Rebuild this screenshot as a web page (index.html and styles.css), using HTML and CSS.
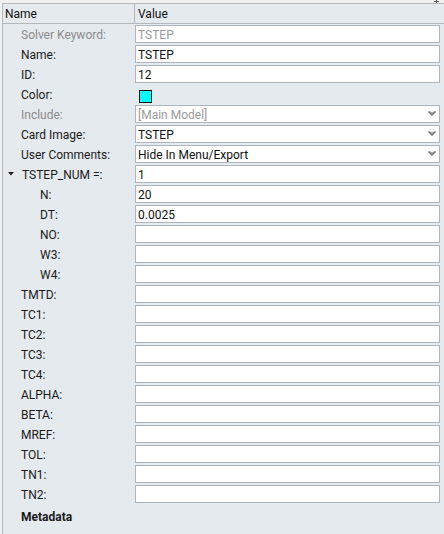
FILE: index.html
```html
<!DOCTYPE html>
<html>
<head>
<meta charset="utf-8">
<link rel="stylesheet" href="styles.css">
</head>
<body>
<div class="topbar"><svg class="pin" width="5" height="3" viewBox="0 0 5 3"><path d="M0 1.5 H5 M2.5 0 V3" stroke="#555" stroke-width="1"/></svg></div>
<div class="panel">
  <div class="header">
    <div class="hcell hname">Name</div>
    <div class="hcell">Value</div>
  </div>
  <div class="rows">
    <div class="row"><div class="label dis">Solver Keyword:</div><div class="field dis">TSTEP</div></div>
    <div class="row"><div class="label">Name:</div><div class="field">TSTEP</div></div>
    <div class="row"><div class="label">ID:</div><div class="field">12</div></div>
    <div class="row"><div class="label">Color:</div><div class="swatchcell"><span class="swatch"></span></div></div>
    <div class="row"><div class="label dis">Include:</div><div class="field dis select">[Main Model]<svg class="chev" width="8" height="6" viewBox="0 0 8 6"><path d="M0.5 0.5 L4 4 L7.5 0.5" fill="none" stroke="#6f6f6f" stroke-width="1.4"/><path d="M2 0.5 L4 2.5 L6 0.5" fill="none" stroke="#6f6f6f" stroke-width="1"/></svg></div></div>
    <div class="row"><div class="label">Card Image:</div><div class="field select">TSTEP<svg class="chev" width="8" height="6" viewBox="0 0 8 6"><path d="M0.5 0.5 L4 4 L7.5 0.5" fill="none" stroke="#6f6f6f" stroke-width="1.4"/><path d="M2 0.5 L4 2.5 L6 0.5" fill="none" stroke="#6f6f6f" stroke-width="1"/></svg></div></div>
    <div class="row"><div class="label">User Comments:</div><div class="field select">Hide In Menu/Export<svg class="chev" width="8" height="6" viewBox="0 0 8 6"><path d="M0.5 0.5 L4 4 L7.5 0.5" fill="none" stroke="#6f6f6f" stroke-width="1.4"/><path d="M2 0.5 L4 2.5 L6 0.5" fill="none" stroke="#6f6f6f" stroke-width="1"/></svg></div></div>
    <div class="row"><div class="label group"><svg class="tri" width="6" height="4" viewBox="0 0 6 4"><path d="M0 0 H6 L3 3.5 Z" fill="#222"/></svg>TSTEP_NUM =:</div><div class="field">1</div></div>
    <div class="row"><div class="label sub">N:</div><div class="field">20</div></div>
    <div class="row"><div class="label sub">DT:</div><div class="field">0.0025</div></div>
    <div class="row"><div class="label sub">NO:</div><div class="field"></div></div>
    <div class="row"><div class="label sub">W3:</div><div class="field"></div></div>
    <div class="row"><div class="label sub">W4:</div><div class="field"></div></div>
    <div class="row"><div class="label">TMTD:</div><div class="field"></div></div>
    <div class="row"><div class="label">TC1:</div><div class="field"></div></div>
    <div class="row"><div class="label">TC2:</div><div class="field"></div></div>
    <div class="row"><div class="label">TC3:</div><div class="field"></div></div>
    <div class="row"><div class="label">TC4:</div><div class="field"></div></div>
    <div class="row"><div class="label">ALPHA:</div><div class="field"></div></div>
    <div class="row"><div class="label">BETA:</div><div class="field"></div></div>
    <div class="row"><div class="label">MREF:</div><div class="field"></div></div>
    <div class="row"><div class="label">TOL:</div><div class="field"></div></div>
    <div class="row"><div class="label">TN1:</div><div class="field"></div></div>
    <div class="row"><div class="label">TN2:</div><div class="field"></div></div>
    <div class="row meta"><div class="label bold">Metadata</div></div>
  </div>
</div>
</body>
</html>
```
FILE: styles.css
```css
html, body {
  margin: 0;
  padding: 0;
  height: 100%;
}
body {
  background: #f0f1f2;
  font-family: Roboto, "Liberation Sans", Arial, sans-serif;
  font-size: 12px;
  color: #111;
  overflow: hidden;
}
.topbar {
  height: 3px;
  position: relative;
}
.pin {
  position: absolute;
  right: 5px;
  top: 0;
}
.panel {
  margin-left: 2px;
  border-top: 1px solid #b3b8bc;
  border-left: 1px solid #b3b8bc;
  background: #e4eaee;
  height: calc(100% - 4px);
}
.header {
  display: grid;
  grid-template-columns: 132px 1fr;
  height: 19px;
  border-bottom: 1px solid #b3b8bc;
}
.hcell {
  line-height: 19px;
  padding-top: 1px;
  height: 18px;
  padding-left: 3px;
  color: #111;
}
.hname {
  border-right: 1px solid #b3b8bc;
  padding-left: 2px;
}
.rows {
  display: flex;
  flex-direction: column;
}
.row {
  display: grid;
  grid-template-columns: 132px 305px;
  height: 20px;
  align-items: center;
}
.label {
  padding-left: 18px;
  white-space: nowrap;
  color: #1a1a1a;
  line-height: 20px;
  padding-top: 1px;
  height: 19px;
}
.label.sub {
  padding-left: 37px;
}
.label.group {
  padding-left: 5px;
  display: flex;
  align-items: center;
}
.tri {
  margin-right: 8px;
  margin-top: -1px;
}
.label.dis {
  color: #8c8c8c;
}
.label.bold {
  font-weight: bold;
}
.row.meta {
  height: 24px;
}
.field {
  height: 15px;
  padding-top: 1px;
  border: 1px solid #b0b5b9;
  background: #fff;
  line-height: 16px;
  padding-left: 2px;
  position: relative;
  color: #111;
}
.field.dis {
  color: #9a9a9a;
}
.chev {
  position: absolute;
  right: 3px;
  top: 5px;
}
.swatchcell {
  height: 18px;
  display: flex;
  align-items: center;
  padding-left: 4px;
}
.swatch {
  width: 11px;
  height: 11px;
  border: 1px solid #000;
  background: #00ffff;
  margin-top: 4px;
}
```
